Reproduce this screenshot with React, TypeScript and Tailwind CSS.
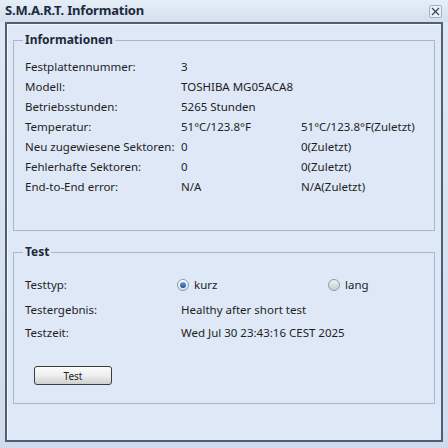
import React from "react";

const Row = ({ label, value, extra }: { label: string; value: React.ReactNode; extra?: string }) => (
  <div className="flex items-center h-[20px]">
    <div className="w-[156px] shrink-0 whitespace-nowrap">{label}</div>
    <div className="w-[120px] shrink-0 whitespace-nowrap">{value}</div>
    {extra && <div className="whitespace-nowrap">{extra}</div>}
  </div>
);

const Radio = ({ checked }: { checked?: boolean }) => (
  <span
    className={
      "inline-flex items-center justify-center w-[12px] h-[12px] rounded-full border border-[#8d9aa8] " +
      (checked ? "bg-gradient-to-b from-[#ffffff] to-[#d6dde6]" : "bg-gradient-to-b from-[#f0f2f4] to-[#c7ccd2]")
    }
  >
    {checked && <span className="w-[6px] h-[6px] rounded-full bg-gradient-to-b from-[#6ea4e0] to-[#1c4f92]" />}
  </span>
);

export default function App() {
  return (
    <div
      className="w-[448px] h-[448px] bg-gradient-to-b from-[#dfe9f6] to-[#d0dced] text-[11.5px] text-[#1e1e1e] flex flex-col"
      style={{ fontFamily: '"Noto Sans", "DejaVu Sans", sans-serif' }}
    >
      <div className="h-[22px] flex items-center justify-between pl-[5px] pr-[6px] bg-gradient-to-b from-[#e6eef8] to-[#d3dfee]">
        <span className="font-bold text-[13px] text-[#1c2a3c] tracking-[-0.2px]">S.M.A.R.T. Information</span>
        <span className="w-[13px] h-[13px] flex items-center justify-center border border-[#9fb0c5] bg-[#e9f0f8] rounded-[2px]">
          <svg width="9" height="9" viewBox="0 0 9 9">
            <path d="M1 1 L8 8 M8 1 L1 8" stroke="#3a4a5e" strokeWidth="1.3" />
          </svg>
        </span>
      </div>
      <div className="ml-[5px] mr-[5px] h-[420px] border-2 border-[#4f6073] bg-[#dfe8f6] shadow-[inset_1px_1px_0_#f5f9fd] pt-[8px] px-[6px]">
        <fieldset className="border border-[#a8b8cc] pl-[10px] pr-[10px] pb-[33px]">
          <legend className="px-[2px] ml-[-1px] font-bold text-[12px] text-[#1c2a3c] leading-[16px]">Informationen</legend>
          <div className="pt-[9px] pl-[1px]">
            <Row label="Festplattennummer:" value="3" />
            <Row label="Modell:" value="TOSHIBA MG05ACA8" />
            <Row label="Betriebsstunden:" value="5265 Stunden" />
            <Row label="Temperatur:" value="51°C/123.8°F" extra="51°C/123.8°F(Zuletzt)" />
            <Row label="Neu zugewiesene Sektoren:" value="0" extra="0(Zuletzt)" />
            <Row label="Fehlerhafte Sektoren:" value="0" extra="0(Zuletzt)" />
            <Row label="End-to-End error:" value="N/A" extra="N/A(Zuletzt)" />
          </div>
        </fieldset>
        <fieldset className="mt-[13px] border border-[#a8b8cc] pl-[10px] pr-[10px] pb-[18px]">
          <legend className="px-[2px] ml-[-1px] font-bold text-[12px] text-[#1c2a3c] leading-[16px]">Test</legend>
          <div className="pt-[13px] pl-[1px]">
            <div className="flex items-center h-[24px]">
              <div className="w-[152px] shrink-0">Testtyp:</div>
              <div className="w-[151px] shrink-0 flex items-center gap-[5px]">
                <Radio checked />
                <span>kurz</span>
              </div>
              <div className="flex items-center gap-[5px]">
                <Radio />
                <span>lang</span>
              </div>
            </div>
            <div className="flex items-center h-[22px] mt-[2px]">
              <div className="w-[156px] shrink-0">Testergebnis:</div>
              <div>Healthy after short test</div>
            </div>
            <div className="flex items-center h-[22px] mt-[1px]">
              <div className="w-[156px] shrink-0">Testzeit:</div>
              <div>Wed Jul 30 23:43:16 CEST 2025</div>
            </div>
            <div className="mt-[22px] pl-[9px]">
              <button className="w-[78px] h-[19px] border border-[#3c3c3c] rounded-[3px] bg-gradient-to-b from-[#fbfbfb] via-[#eeeeee] to-[#cfcfcf] text-[10px] text-[#222] leading-none">
                Test
              </button>
            </div>
          </div>
        </fieldset>
      </div>
    </div>
  );
}
